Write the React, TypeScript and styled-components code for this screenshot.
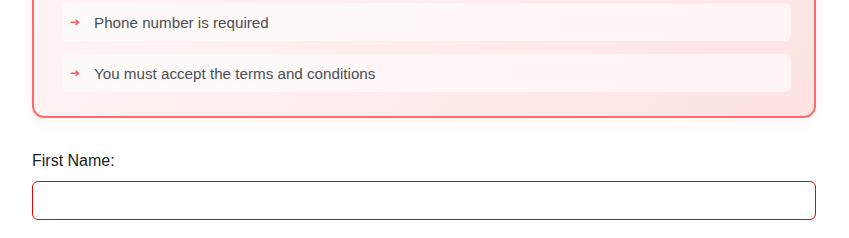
import styled, { createGlobalStyle } from "styled-components";

const GlobalStyle = createGlobalStyle`
  html, body {
    margin: 0;
    padding: 0;
    background: #ffffff;
    font-family: "Liberation Sans", Arial, sans-serif;
    overflow: hidden;
  }
`;

const errors = ["Phone number is required", "You must accept the terms and conditions"];

const App = () => {
  return (
    <>
      <GlobalStyle />
      <Page>
        <ErrorBox>
          <ErrorList>
            {errors.map((msg) => (
              <ErrorItem key={msg}>
                <Arrow>➜</Arrow>
                {msg}
              </ErrorItem>
            ))}
          </ErrorList>
        </ErrorBox>
        <Field>
          <Label htmlFor="firstName">First Name:</Label>
          <Input id="firstName" type="text" />
        </Field>
      </Page>
    </>
  );
};

const Page = styled.div`
  display: flex;
  flex-direction: column;
  width: 784px;
  margin: -23px 0 0 32px;
`;

const ErrorBox = styled.div`
  border: 2px solid #ff6b6b;
  border-radius: 12px;
  background: linear-gradient(135deg, #fff5f5 0%, #ffe3e3 100%);
  box-shadow: 0 4px 14px rgba(255, 107, 107, 0.08);
  padding: 24px 23px 24px 28px;
`;

const ErrorList = styled.ul`
  list-style: none;
  margin: 0;
  padding: 0;
  display: flex;
  flex-direction: column;
  gap: 13px;
`;

const ErrorItem = styled.li`
  display: flex;
  align-items: center;
  height: 38px;
  padding: 0 8px;
  border-radius: 6px;
  background: rgba(255, 255, 255, 0.6);
  color: #4a4e57;
  font-size: 15.2px;
`;

const Arrow = styled.span`
  color: #ff5c5c;
  font-size: 12px;
  width: 24px;
  font-family: "DejaVu Sans", sans-serif;
`;

const Field = styled.div`
  display: flex;
  flex-direction: column;
  margin-top: 33px;
`;

const Label = styled.label`
  font-size: 16px;
  color: #222;
  line-height: 20px;
  margin-bottom: 10px;
`;

const Input = styled.input`
  box-sizing: border-box;
  height: 39px;
  width: 100%;
  border: 1px solid #f00000;
  border-radius: 6px;
  padding: 0 10px;
  font-size: 16px;
  outline: none;
  background: #fff;
`;

export default App;
